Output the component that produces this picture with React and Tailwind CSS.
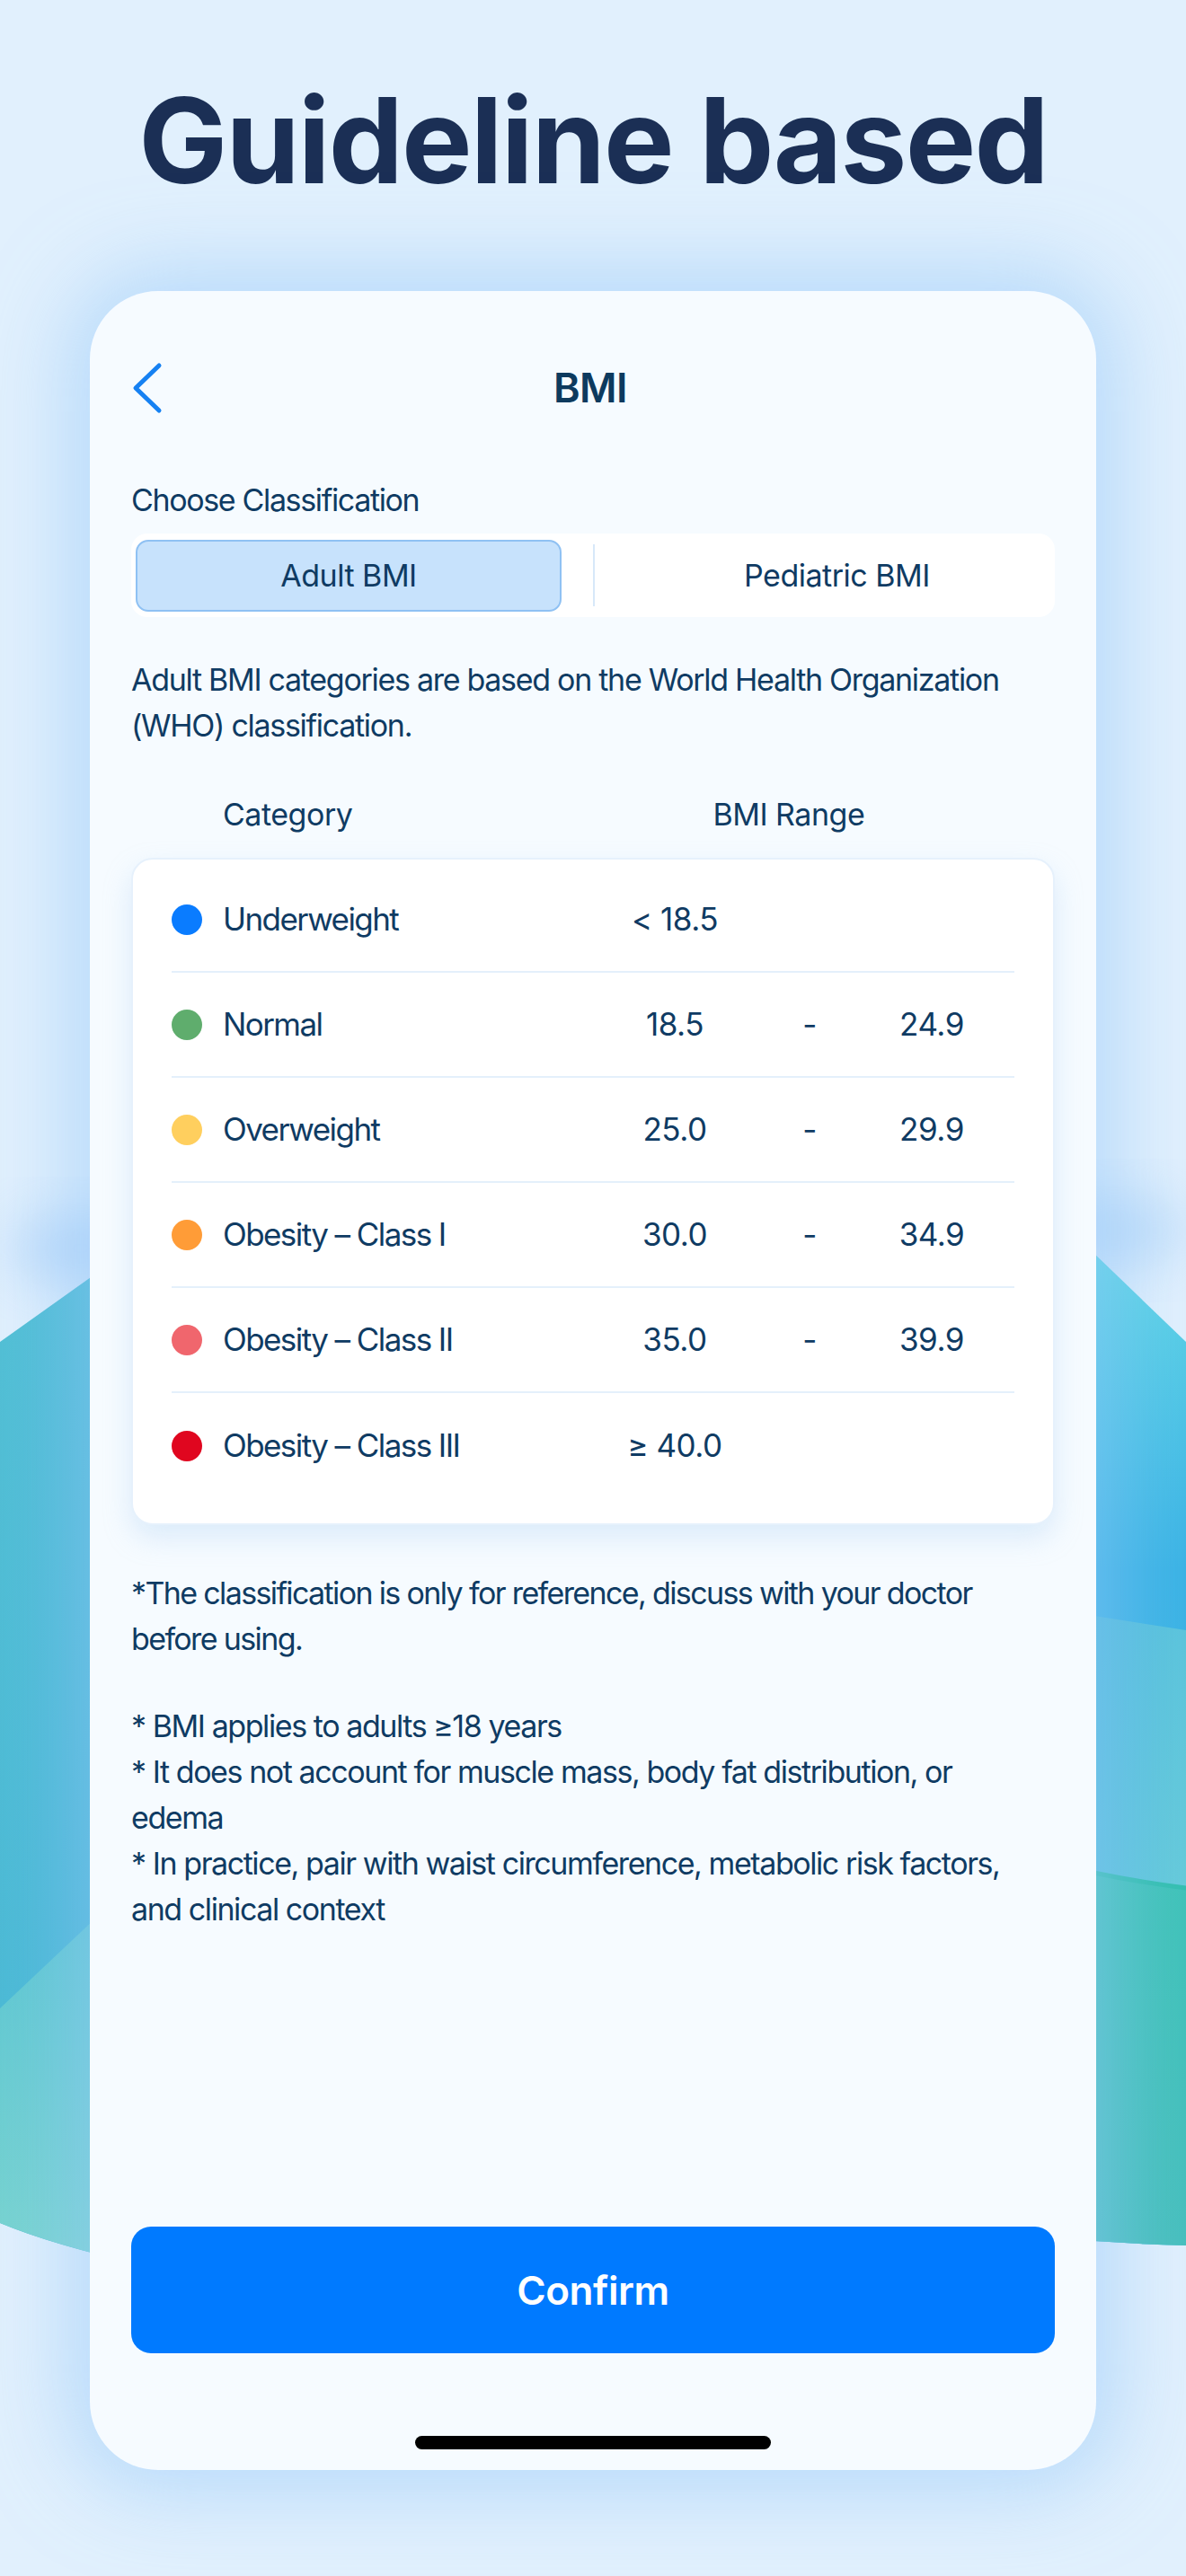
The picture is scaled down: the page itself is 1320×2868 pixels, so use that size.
import React from 'react';

const rows = [
  { name: 'Underweight', color: 'bg-[#0a7cff]', single: '< 18.5' },
  { name: 'Normal', color: 'bg-[#5fad6d]', from: '18.5', to: '24.9' },
  { name: 'Overweight', color: 'bg-[#ffcf5e]', from: '25.0', to: '29.9' },
  { name: 'Obesity – Class I', color: 'bg-[#ff9c37]', from: '30.0', to: '34.9' },
  { name: 'Obesity – Class II', color: 'bg-[#f0666d]', from: '35.0', to: '39.9' },
  { name: 'Obesity – Class III', color: 'bg-[#e0061f]', single: '≥ 40.0' },
];

const Background = () => (
  <svg className="absolute inset-0" width="1320" height="2868" viewBox="0 0 1320 2868">
    <defs>
      <linearGradient id="leftTop" x1="0" y1="0" x2="1" y2="1">
        <stop offset="0" stopColor="#52c0d4" />
        <stop offset="1" stopColor="#40b0d6" />
      </linearGradient>
      <linearGradient id="leftLow" x1="0" y1="0" x2="0" y2="1">
        <stop offset="0" stopColor="#58c4d2" />
        <stop offset="1" stopColor="#7ad4d0" />
      </linearGradient>
      <linearGradient id="rightTop" x1="0" y1="0" x2="0" y2="1">
        <stop offset="0" stopColor="#66dae6" />
        <stop offset="0.35" stopColor="#3bb3e5" />
        <stop offset="1" stopColor="#3fb2e0" />
      </linearGradient>
      <linearGradient id="rightMid" x1="0" y1="0" x2="1" y2="1">
        <stop offset="0" stopColor="#42b4de" />
        <stop offset="1" stopColor="#74d4d8" />
      </linearGradient>
      <linearGradient id="rightLow" x1="0" y1="0" x2="0" y2="1">
        <stop offset="0" stopColor="#3fc3b8" />
        <stop offset="1" stopColor="#47bfbd" />
      </linearGradient>
      <filter id="soft" x="-50%" y="-50%" width="200%" height="200%">
        <feGaussianBlur stdDeviation="30" />
      </filter>
    </defs>
    <ellipse cx="90" cy="1390" rx="80" ry="40" fill="#94c3f6" filter="url(#soft)" opacity="0.5" />
    <ellipse cx="1240" cy="1370" rx="80" ry="40" fill="#9ac8f6" filter="url(#soft)" opacity="0.5" />
    <path d="M0 1494 L160 1380 L160 2522 Q60 2500 0 2475 Z" fill="url(#leftTop)" />
    <path d="M0 2236 L160 2085 L160 2522 Q60 2500 0 2475 Z" fill="url(#leftLow)" />
    <path d="M1160 1340 L1320 1494 L1320 2500 Q1240 2498 1160 2490 Z" fill="url(#rightTop)" />
    <path d="M1160 1790 L1320 1815 L1320 2500 Q1240 2498 1160 2490 Z" fill="url(#rightMid)" />
    <path d="M1160 2072 Q1240 2092 1320 2102 L1320 2500 Q1240 2498 1160 2490 Z" fill="url(#rightLow)" />
    <path d="M1160 2072 Q1240 2092 1320 2102" stroke="#33bfb0" strokeWidth="5" fill="none" />
  </svg>
);

const Chevron = () => (
  <svg width="36" height="58" viewBox="0 0 36 58" fill="none">
    <path d="M31 4 L5 29 L31 54" stroke="#1681f2" strokeWidth="5" strokeLinecap="round" strokeLinejoin="round" />
  </svg>
);

export default function App() {
  return (
    <div
      className="relative w-[1320px] h-[2868px] overflow-hidden bg-[#e1f0fd] text-[#0f3b63] tracking-[-0.03em]"
      style={{ fontFamily: 'Inter, "Noto Sans", sans-serif' }}
    >
      <Background />
      <div className="relative flex flex-col items-center">
        <h1 className="mt-[84px] h-[144px] text-[132px] leading-[144px] font-bold tracking-[-0.014em] text-[#1b2f55]">
          Guideline based
        </h1>

        <div className="mt-[96px] w-[1120px] h-[2426px] rounded-[76px] bg-[#f6fbff] shadow-[0_0_90px_24px_rgba(150,200,250,0.55)] flex flex-col px-[46px]">
          <div className="mt-[68px] h-[80px] grid grid-cols-[1fr_auto_1fr] items-center">
            <div className="flex items-center">
              <Chevron />
            </div>
            <div className="text-[45px] font-semibold text-[#0d3a5e] -ml-[6px]">BMI</div>
            <div />
          </div>

          <div className="mt-[63px] text-[34px] leading-[44px] tracking-[-0.04em]">Choose Classification</div>

          <div className="mt-[15px] h-[93px] bg-white rounded-[18px] p-[5px] flex items-center">
            <div className="w-[474px] h-[80px] rounded-[14px] bg-[#c7e2fc] border-2 border-[#8fc1f3] flex items-center justify-center text-[34px]">
              Adult BMI
            </div>
            <div className="ml-[35px] w-[2px] h-[69px] bg-[#d7e8f9]" />
            <div className="flex-1 flex items-center justify-center pl-[32px] text-[34px]">Pediatric BMI</div>
          </div>

          <p className="mt-[44px] text-[34px] leading-[51px] whitespace-nowrap tracking-[-0.038em]">
            Adult BMI categories are based on the World Health Organization
            <br />
            (WHO) classification.
          </p>

          <div className="mt-[48px] h-[51px] flex items-center text-[34px]">
            <span className="ml-[102px]">Category</span>
            <span className="ml-[401px]">BMI Range</span>
          </div>

          <div className="mt-[23px] bg-white border-2 border-[#e6f1fc] rounded-[24px] shadow-[0_14px_30px_rgba(170,205,240,0.35)] px-[43px] pt-[9px] pb-[28px]">
            {rows.map((r, i) => (
              <div
                key={r.name}
                className={`h-[117px] grid grid-cols-[460px_200px_100px_172px] items-center text-[35px] ${
                  i < rows.length - 1 ? 'border-b-2 border-[#e4f0fb]' : ''
                }`}
              >
                <div className="flex items-center gap-[23px]">
                  <span className={`w-[34px] h-[34px] rounded-full ${r.color}`} />
                  <span className="tracking-[-0.045em]">{r.name}</span>
                </div>
                {r.single ? (
                  <div className="text-center">{r.single}</div>
                ) : (
                  <>
                    <div className="text-center">{r.from}</div>
                    <div className="text-center">-</div>
                    <div className="text-center">{r.to}</div>
                  </>
                )}
              </div>
            ))}
          </div>

          <p className="mt-[50px] text-[34px] leading-[51px] whitespace-nowrap tracking-[-0.048em]">
            *The classification is only for reference, discuss with your doctor
            <br />
            before using.
          </p>
          <p className="mt-[46px] text-[34px] leading-[51px] whitespace-nowrap tracking-[-0.042em]">
            * BMI applies to adults ≥18 years
            <br />
            * It does not account for muscle mass, body fat distribution, or
            <br />
            edema
            <br />
            * In practice, pair with waist circumference, metabolic risk factors,
            <br />
            and clinical context
          </p>

          <button className="mt-auto h-[141px] w-full rounded-[22px] bg-[#007aff] text-white text-[44px] font-semibold tracking-[-0.01em]">
            Confirm
          </button>
          <div className="mt-[92px] mb-[23px] self-center w-[396px] h-[15px] rounded-full bg-black" />
        </div>
      </div>
    </div>
  );
}
